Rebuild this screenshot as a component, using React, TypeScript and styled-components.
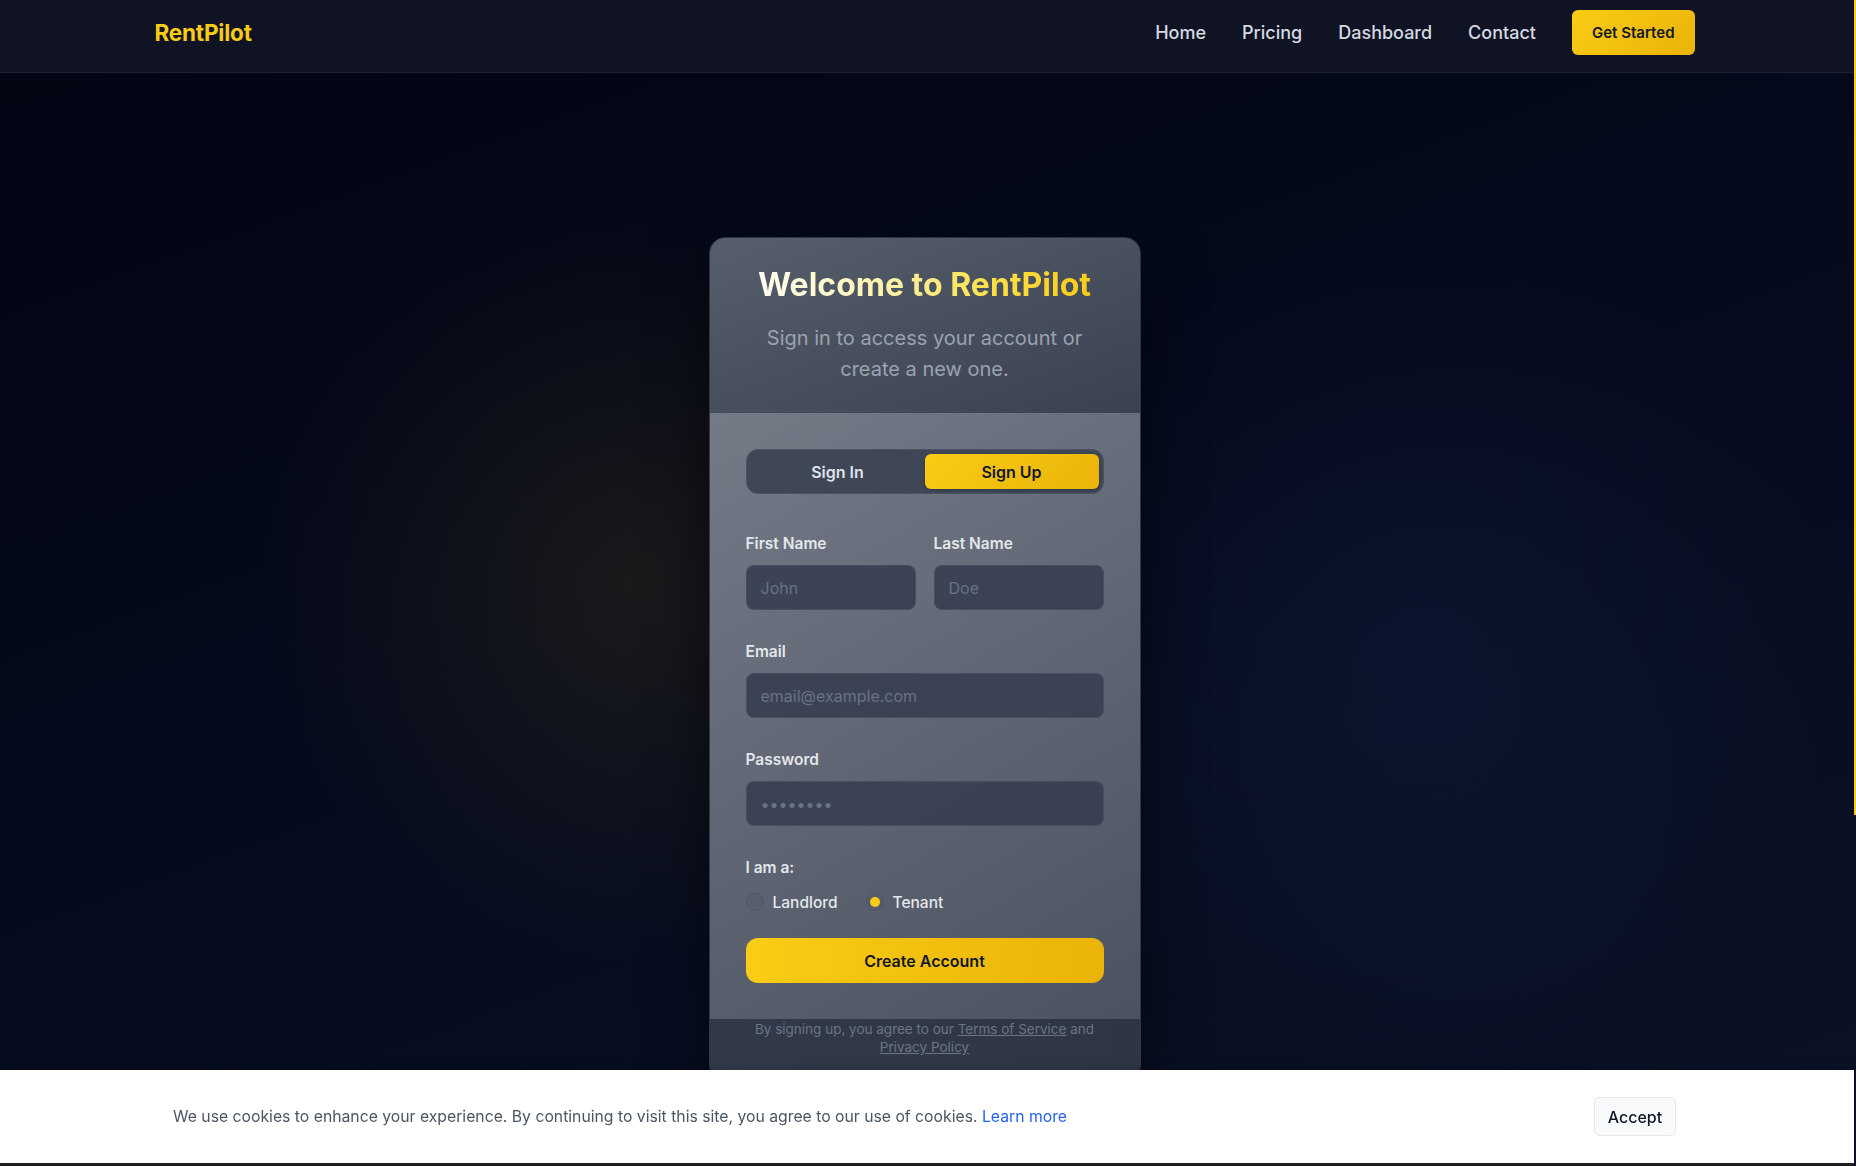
import React, { useState } from "react";
import styled, { createGlobalStyle } from "styled-components";

const GlobalStyle = createGlobalStyle`
  * {
    box-sizing: border-box;
  }
  body {
    margin: 0;
    background: #0b1327;
    font-family: Inter, "Noto Sans", "Liberation Sans", sans-serif;
    color: #e5e7eb;
    -webkit-font-smoothing: antialiased;
  }
  input, button {
    font-family: inherit;
  }
`;

const NavBar = styled.header`
  height: 73px;
  padding: 10px 7px 0 0;
  background: #0f1324;
  border-bottom: 1px solid #1c2234;
`;

const NavInner = styled.div`
  max-width: 1540px;
  margin: 0 auto;
  height: 45px;
  display: flex;
  align-items: center;
  justify-content: space-between;
`;

const Logo = styled.a`
  font-size: 22.5px;
  font-weight: 700;
  color: #facc15;
  text-decoration: none;
  letter-spacing: -0.2px;
`;

const NavLinks = styled.nav`
  display: flex;
  align-items: center;
  gap: 36px;
`;

const NavLink = styled.a`
  font-size: 18px;
  font-weight: 500;
  color: #d5d9e0;
  text-decoration: none;
`;

const CtaButton = styled.button`
  height: 45px;
  padding: 0 20px;
  border: none;
  border-radius: 6px;
  background: linear-gradient(135deg, #facc15, #eab308);
  color: #111827;
  font-size: 15px;
  font-weight: 600;
  cursor: pointer;
`;

const Hero = styled.main`
  display: flex;
  justify-content: center;
  align-items: flex-start;
  padding: 164px 7px 164px 0;
  background:
    radial-gradient(circle 380px at 640px 510px, rgba(120, 96, 24, 0.18), transparent),
    radial-gradient(circle 420px at 1420px 590px, rgba(38, 66, 125, 0.14), transparent),
    linear-gradient(160deg, #020512 0%, #050b1d 45%, #0b1327 100%);
`;

const Card = styled.section`
  width: 432px;
  border-radius: 16px;
  overflow: hidden;
  border: 1px solid rgba(120, 130, 148, 0.35);
  box-shadow: 0 25px 60px rgba(0, 0, 0, 0.55);
`;

const CardHeader = styled.div`
  padding: 29px 32px 28px;
  text-align: center;
  background: linear-gradient(160deg, #575f6d 0%, #48505e 50%, #3a4252 100%);
`;

const Title = styled.h1`
  margin: 0;
  font-size: 32px;
  line-height: 36px;
  font-weight: 700;
  background: linear-gradient(90deg, #fffdf2 0%, #fef3a8 40%, #fde047 70%, #facc15 100%);
  -webkit-background-clip: text;
  background-clip: text;
  color: transparent;
  display: inline-block;
`;

const Subtitle = styled.p`
  margin: 20px 0 0;
  font-size: 20px;
  line-height: 31px;
  color: #9aa2b0;
`;

const CardBody = styled.div`
  padding: 36px 36px 36px;
  background: linear-gradient(150deg, #747a86 0%, #626875 45%, #4b5261 100%);
`;

const Tabs = styled.div`
  display: grid;
  grid-template-columns: 1fr 1fr;
  padding: 4px;
  height: 45px;
  border-radius: 12px;
  background: #3f4757;
  border: 1px solid #4b5363;
  margin-bottom: 40px;
`;

const Tab = styled.button<{ $active?: boolean }>`
  border: none;
  border-radius: 6px;
  font-size: 16px;
  font-weight: 600;
  cursor: pointer;
  color: ${(p) => (p.$active ? "#111827" : "#dfe3ea")};
  background: ${(p) =>
    p.$active ? "linear-gradient(135deg, #facc15, #eab308)" : "transparent"};
  box-shadow: ${(p) => (p.$active ? "0 1px 3px rgba(0,0,0,0.25)" : "none")};
`;

const Form = styled.form`
  display: flex;
  flex-direction: column;
  gap: 32px;
`;

const Row = styled.div`
  display: grid;
  grid-template-columns: 1fr 1fr;
  gap: 18px;
`;

const Field = styled.div`
  display: flex;
  flex-direction: column;
`;

const Label = styled.label`
  font-size: 15.5px;
  line-height: 20px;
  font-weight: 600;
  color: #e3e6eb;
  margin-bottom: 11px;
`;

const Input = styled.input`
  height: 45px;
  width: 100%;
  padding: 0 14px;
  border-radius: 8px;
  border: 1px solid rgba(70, 79, 96, 0.9);
  background: rgba(55, 63, 80, 0.92);
  color: #e5e7eb;
  font-size: 16px;
  outline: none;
  &::placeholder {
    color: #687387;
  }
`;

const RadioRow = styled.div`
  display: flex;
  align-items: center;
  gap: 28px;
  height: 24px;
  margin-top: 1px;
`;

const RadioOption = styled.label`
  display: flex;
  align-items: center;
  gap: 9px;
  font-size: 15.5px;
  font-weight: 500;
  color: #e5e7eb;
  cursor: pointer;
`;

const RadioInput = styled.input`
  appearance: none;
  margin: 0;
  width: 18px;
  height: 18px;
  border-radius: 50%;
  border: 1px solid #4e586a;
  background: rgba(80, 88, 104, 0.35);
  display: grid;
  place-items: center;
  cursor: pointer;
  &:checked::after {
    content: "";
    width: 10px;
    height: 10px;
    border-radius: 50%;
    background: #facc15;
  }
`;

const RoleGroup = styled.div`
  display: flex;
  flex-direction: column;
`;

const SubmitButton = styled.button`
  margin-top: -8px;
  height: 45px;
  border: none;
  border-radius: 12px;
  background: linear-gradient(90deg, #facc15, #eab308);
  color: #111827;
  font-size: 16px;
  font-weight: 600;
  cursor: pointer;
`;

const CardFooter = styled.div`
  padding: 1px 36px 24px;
  background: linear-gradient(90deg, #323a49, #2e3645);
  text-align: center;
  font-size: 13.5px;
  line-height: 18px;
  color: #6b7485;
`;

const FooterLink = styled.a`
  color: #6b7485;
  text-decoration: underline;
`;

const CookieBanner = styled.div`
  position: fixed;
  left: 0;
  right: 2px;
  bottom: 0;
  height: 96px;
  background: #ffffff;
  border-bottom: 3px solid #1e1e1e;
  box-shadow: 0 -2px 10px rgba(0, 0, 0, 0.15);
  display: flex;
  align-items: center;
  justify-content: space-between;
  padding: 0 178px 0 173px;
`;

const CookieText = styled.p`
  margin: 0;
  font-size: 15.75px;
  color: #4b5563;
`;

const CookieLink = styled.a`
  color: #2563eb;
  text-decoration: none;
`;

const AcceptButton = styled.button`
  width: 82px;
  height: 39px;
  border-radius: 6px;
  border: 1px solid #e5e7eb;
  background: #f9fafb;
  color: #111827;
  font-size: 16px;
  font-weight: 500;
  cursor: pointer;
`;

const ScrollThumb = styled.div`
  position: fixed;
  top: 0;
  right: 0;
  width: 2px;
  height: 815px;
  background: #facc15;
`;

export default function App() {
  const [mode, setMode] = useState<"in" | "up">("up");
  const [role, setRole] = useState<"landlord" | "tenant">("tenant");

  return (
    <>
      <GlobalStyle />
      <NavBar>
        <NavInner>
          <Logo href="#">RentPilot</Logo>
          <NavLinks>
            <NavLink href="#">Home</NavLink>
            <NavLink href="#">Pricing</NavLink>
            <NavLink href="#">Dashboard</NavLink>
            <NavLink href="#">Contact</NavLink>
            <CtaButton>Get Started</CtaButton>
          </NavLinks>
        </NavInner>
      </NavBar>

      <Hero>
        <Card>
          <CardHeader>
            <Title>Welcome to RentPilot</Title>
            <Subtitle>Sign in to access your account or create a new one.</Subtitle>
          </CardHeader>
          <CardBody>
            <Tabs>
              <Tab type="button" $active={mode === "in"} onClick={() => setMode("in")}>
                Sign In
              </Tab>
              <Tab type="button" $active={mode === "up"} onClick={() => setMode("up")}>
                Sign Up
              </Tab>
            </Tabs>
            <Form onSubmit={(e) => e.preventDefault()}>
              <Row>
                <Field>
                  <Label htmlFor="first">First Name</Label>
                  <Input id="first" placeholder="John" />
                </Field>
                <Field>
                  <Label htmlFor="last">Last Name</Label>
                  <Input id="last" placeholder="Doe" />
                </Field>
              </Row>
              <Field>
                <Label htmlFor="email">Email</Label>
                <Input id="email" type="email" placeholder="email@example.com" />
              </Field>
              <Field>
                <Label htmlFor="password">Password</Label>
                <Input id="password" type="password" placeholder="••••••••" />
              </Field>
              <RoleGroup>
                <Label as="span">I am a:</Label>
                <RadioRow>
                  <RadioOption>
                    <RadioInput
                      type="radio"
                      name="role"
                      checked={role === "landlord"}
                      onChange={() => setRole("landlord")}
                    />
                    Landlord
                  </RadioOption>
                  <RadioOption>
                    <RadioInput
                      type="radio"
                      name="role"
                      checked={role === "tenant"}
                      onChange={() => setRole("tenant")}
                    />
                    Tenant
                  </RadioOption>
                </RadioRow>
              </RoleGroup>
              <SubmitButton type="submit">Create Account</SubmitButton>
            </Form>
          </CardBody>
          <CardFooter>
            By signing up, you agree to our <FooterLink href="#">Terms of Service</FooterLink> and{" "}
            <FooterLink href="#">Privacy Policy</FooterLink>
          </CardFooter>
        </Card>
      </Hero>

      <CookieBanner>
        <CookieText>
          We use cookies to enhance your experience. By continuing to visit this site, you agree to our
          use of cookies. <CookieLink href="#">Learn more</CookieLink>
        </CookieText>
        <AcceptButton>Accept</AcceptButton>
      </CookieBanner>
      <ScrollThumb />
    </>
  );
}
